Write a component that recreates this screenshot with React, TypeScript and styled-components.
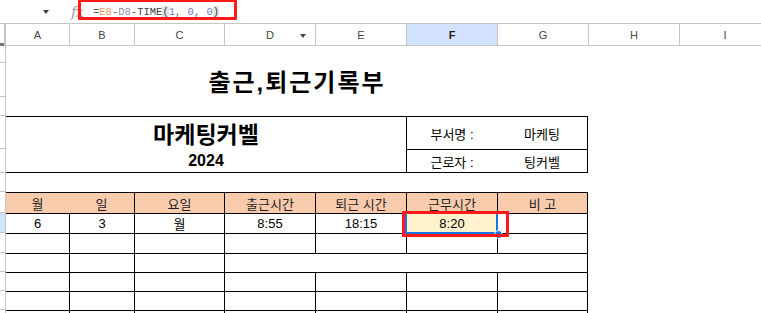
import styled, { createGlobalStyle } from "styled-components";

const GlobalStyle = createGlobalStyle`
  html, body { margin: 0; padding: 0; background: #fff; }
  body { font-family: "Liberation Sans", "Noto Sans CJK KR", sans-serif; overflow: hidden; }
`;

const Page = styled.div`
  position: relative;
  width: 761px;
  height: 313px;
  overflow: hidden;
`;

// formula bar
const FormulaBar = styled.div`
  display: flex;
  align-items: center;
  height: 23px;
`;

const NameBox = styled.div`
  width: 71px;
  box-sizing: border-box;
  padding-left: 43px;
  display: flex;
  align-items: center;
`;

const Caret = styled.span<{ $color?: string }>`
  display: inline-block;
  width: 0;
  height: 0;
  border-left: 3.5px solid transparent;
  border-right: 3.5px solid transparent;
  border-top: 4px solid ${(p) => p.$color ?? "#444746"};
`;

const Fx = styled.span`
  width: 22px;
  font-family: "DejaVu Serif", "Liberation Serif", serif;
  font-style: italic;
  font-size: 15px;
  color: #9aa0a6;
  letter-spacing: -1px;
`;

const Formula = styled.div`
  font-family: "Liberation Mono", monospace;
  font-size: 10.5px;
  color: #5f6368;
  white-space: pre;
`;

const Tok = styled.span<{ $color?: string; $hl?: boolean }>`
  color: ${(p) => p.$color ?? "inherit"};
  background: ${(p) => (p.$hl ? "#e3e3e3" : "transparent")};
`;

// sheet grid
const Sheet = styled.div`
  display: grid;
  grid-template-columns: 6px 63px 65px 90px 91px 91px 91px 91px 91px 91px;
  grid-template-rows: 23px 17px 34px 19px 33px 24px 19px 21px 20px 20px 19px 19px 19px 20px;
`;

const Corner = styled.div`
  grid-column: 1;
  grid-row: 1;
  box-sizing: border-box;
  border-top: 1px solid #c4c7c5;
  border-right: 2px solid #c4c7c5;
  display: flex;
  align-items: flex-end;
  &::after {
    content: "";
    display: block;
    width: 4px;
    height: 3px;
    background: #747775;
  }
`;

const ColHead = styled.div<{ $c: number; $active?: boolean }>`
  grid-column: ${(p) => p.$c};
  grid-row: 1;
  position: relative;
  box-sizing: border-box;
  border-top: 1px solid #c4c7c5;
  border-bottom: 1px solid #c4c7c5;
  border-left: ${(p) => (p.$c > 2 ? "1px solid #c4c7c5" : "0")};
  background: ${(p) => (p.$active ? "#d3e3fd" : "#fff")};
  color: ${(p) => (p.$active ? "#1f1f1f" : "#444746")};
  font-weight: ${(p) => (p.$active ? 700 : 400)};
  font-size: 11px;
  display: flex;
  align-items: center;
  justify-content: center;
`;

const HeadMenu = styled.span`
  position: absolute;
  right: 9px;
  top: 10px;
  display: flex;
`;

const RowHead = styled.div<{ $r: number; $active?: boolean }>`
  grid-column: 1;
  grid-row: ${(p) => p.$r};
  box-sizing: border-box;
  border-right: 1px solid #c4c7c5;
  border-bottom: 1px solid #c4c7c5;
  background: ${(p) => (p.$active ? "#d3e3fd" : "#fff")};
`;

type CellProps = {
  $c: number;
  $cs?: number;
  $r: number;
  $rs?: number;
  $t?: boolean;
  $l?: boolean;
  $rt?: boolean;
  $b?: boolean;
  $bg?: string;
  $size?: number;
  $bold?: boolean;
  $color?: string;
  $spacing?: number;
};

const line = "1px solid #000";

const Cell = styled.div<CellProps>`
  grid-column: ${(p) => p.$c} / span ${(p) => p.$cs ?? 1};
  grid-row: ${(p) => p.$r} / span ${(p) => p.$rs ?? 1};
  box-sizing: border-box;
  display: flex;
  align-items: center;
  justify-content: center;
  white-space: nowrap;
  border-top: ${(p) => (p.$t ? line : "0")};
  border-left: ${(p) => (p.$l ? line : "0")};
  border-right: ${(p) => (p.$rt ? line : "0")};
  border-bottom: ${(p) => (p.$b ? line : "0")};
  background: ${(p) => p.$bg ?? "transparent"};
  font-size: ${(p) => p.$size ?? 13}px;
  font-weight: ${(p) => (p.$bold ? 700 : 400)};
  letter-spacing: ${(p) => p.$spacing ?? 0}px;
  color: ${(p) => p.$color ?? "#000"};
`;

// overlays
const Selection = styled.div`
  position: absolute;
  left: 405px;
  top: 212px;
  width: 93px;
  height: 22px;
  box-sizing: border-box;
  border: 2px solid #1a73e8;
`;

const FillHandle = styled.div`
  position: absolute;
  left: 494px;
  top: 230px;
  width: 7px;
  height: 7px;
  border-radius: 50%;
  background: #1a73e8;
  border: 1px solid #fff;
`;

const Annotation = styled.div<{ $x: number; $y: number; $w: number; $h: number }>`
  position: absolute;
  left: ${(p) => p.$x}px;
  top: ${(p) => p.$y}px;
  width: ${(p) => p.$w}px;
  height: ${(p) => p.$h}px;
  box-sizing: border-box;
  border: 3px solid #ff1a1a;
  border-radius: 1px;
`;

const cols = ["A", "B", "C", "D", "E", "F", "G", "H", "I"];
const rowHeights = [2, 3, 4, 5, 6, 7, 8, 9, 10, 11, 12, 13, 14];
const headers = ["월", "일", "요일", "출근시간", "퇴근 시간", "근무시간", "비 고"];
const firstRow = ["6", "3", "월", "8:55", "18:15", "8:20", ""];
const emptyRows = [10, 12, 13, 14];

export default function App() {
  return (
    <Page>
      <GlobalStyle />
      <FormulaBar>
        <NameBox>
          <Caret $color="#3c4043" />
        </NameBox>
        <Fx>fx</Fx>
        <Formula>
          <Tok>=</Tok>
          <Tok $color="#f2945e">E8</Tok>
          <Tok>-</Tok>
          <Tok $color="#8d87b5">D8</Tok>
          <Tok>-</Tok>
          <Tok $color="#3c4043">TIME</Tok>
          <Tok $hl $color="#3c4043">(</Tok>
          <Tok $color="#6f72d9">1</Tok>
          <Tok>, </Tok>
          <Tok $color="#6f72d9">0</Tok>
          <Tok>, </Tok>
          <Tok $color="#6f72d9">0</Tok>
          <Tok $hl $color="#3c4043">)</Tok>
        </Formula>
      </FormulaBar>

      <Sheet>
        <Corner />
        {cols.map((c, i) => (
          <ColHead key={c} $c={i + 2} $active={c === "F"}>
            {c}
            {c === "D" && (
              <HeadMenu>
                <Caret />
              </HeadMenu>
            )}
          </ColHead>
        ))}
        {rowHeights.map((r) => (
          <RowHead key={r} $r={r} $active={r === 9} />
        ))}

        {/* title */}
        <Cell $c={2} $cs={7} $r={3} $size={24} $bold $spacing={2}>
          출근,퇴근기록부
        </Cell>

        {/* name block */}
        <Cell $c={2} $cs={5} $r={5} $t $size={23} $bold>
          마케팅커벨
        </Cell>
        <Cell $c={2} $cs={5} $r={6} $b $size={16} $bold>
          2024
        </Cell>
        <Cell $c={7} $r={5} $t $l>
          부서명 :
        </Cell>
        <Cell $c={8} $r={5} $t $rt>
          마케팅
        </Cell>
        <Cell $c={7} $r={6} $t $l $b>
          근로자 :
        </Cell>
        <Cell $c={8} $r={6} $t $rt $b>
          팅커벨
        </Cell>

        {/* table header */}
        {headers.map((h, i) => (
          <Cell
            key={h}
            $c={i + 2}
            $r={8}
            $t
            $l={i > 1}
            $rt={i === 6}
            $bg="#f8cbad"
            $color="#1f1f1f"
          >
            {h}
          </Cell>
        ))}

        {/* first data row */}
        {firstRow.map((v, i) => (
          <Cell
            key={i}
            $c={i + 2}
            $r={9}
            $t
            $l={i > 0}
            $rt={i === 6}
            $bg={i === 5 ? "#fff2cc" : undefined}
          >
            {v}
          </Cell>
        ))}

        {/* empty rows */}
        {emptyRows.map((r) =>
          headers.map((_, i) => (
            <Cell key={`${r}-${i}`} $c={i + 2} $r={r} $t $l={i > 0} $rt={i === 6} />
          ))
        )}
        <Cell $c={2} $r={11} $t />
        <Cell $c={3} $r={11} $t $l />
        <Cell $c={4} $r={11} $t $l />
        <Cell $c={5} $cs={4} $r={11} $t $l $rt />
      </Sheet>

      <Selection />
      <FillHandle />
      <Annotation $x={78} $y={-1} $w={159} $h={21} />
      <Annotation $x={402} $y={211} $w={107} $h={26} />
    </Page>
  );
}
